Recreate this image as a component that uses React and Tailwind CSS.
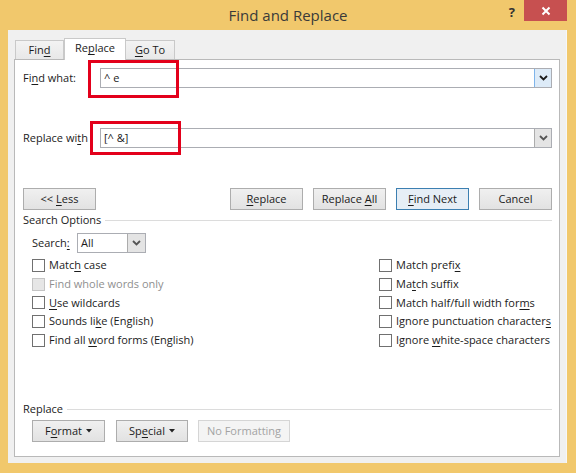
import React from "react";

const FONT = { fontFamily: '"Open Sans", "Noto Sans", sans-serif' };

function Chevron({ dark }) {
  return (
    <svg width="9" height="6" viewBox="0 0 9 6">
      <path
        d="M1 1l3.5 3.5L8 1"
        fill="none"
        stroke={dark ? "#1a1a1a" : "#555"}
        strokeWidth="1.8"
      />
    </svg>
  );
}

function Btn({ children, w = "w-[73px]", primary, disabled }) {
  return (
    <div
      className={`${w} h-[22px] flex items-center justify-center border text-[11px] whitespace-nowrap ${
        primary
          ? "border-[#3C7FB1] bg-[#E6EEF6]"
          : disabled
            ? "border-[#D5D5D5] bg-[#F4F4F4] text-[#A3A3A3]"
            : "border-[#ADADAD] bg-gradient-to-b from-[#F0F0F0] to-[#E2E2E2]"
      }`}
    >
      <span>{children}</span>
    </div>
  );
}

function Check({ children, disabled }) {
  return (
    <div className="h-[18.75px] flex items-center whitespace-nowrap">
      <div
        className={`w-[13px] h-[13px] shrink-0 border ${
          disabled ? "border-[#C4C4C4] bg-[#E6E6E6]" : "border-[#707070] bg-white"
        }`}
      />
      <span className={`ml-[4px] text-[11px] ${disabled ? "text-[#8F8F8F]" : ""}`}>
        {children}
      </span>
    </div>
  );
}

const U = ({ children }) => <u className="underline-offset-2">{children}</u>;

function Arrow() {
  return (
    <svg width="6" height="4" viewBox="0 0 6 4" className="inline-block ml-[4px] mb-[2px]">
      <path d="M0 0h6L3 3.5z" fill="#222" />
    </svg>
  );
}

export default function App() {
  return (
    <div
      className="w-[576px] h-[473px] bg-[#F1C86C] flex flex-col text-[#1b1b1b]"
      style={FONT}
    >
      {/* title bar */}
      <div className="h-[30px] flex items-start shrink-0">
        <div className="w-[80px]" />
        <div className="flex-1 text-center text-[15px] leading-[30px] text-[#3a3a3a]">
          Find and Replace
        </div>
        <div className="w-[80px] flex justify-end pr-[9px]">
          <span className="mt-[3px] mr-[9px] text-[13px] font-bold text-[#333]">?</span>
          <div className="w-[43px] h-[21px] bg-[#C75050] flex items-center justify-center">
            <svg width="10" height="10" viewBox="0 0 10 10">
              <path d="M1.5 1.5l7 7M8.5 1.5l-7 7" stroke="#fff" strokeWidth="2" />
            </svg>
          </div>
        </div>
      </div>

      {/* body */}
      <div className="flex-1 ml-[8px] mr-[9px] mb-[10px] bg-[#F0F0F0] border-r border-[#F7F7F7] flex flex-col pt-[7px] pl-[6px] pr-[6px] pb-[6px]">
        {/* tabs */}
        <div className="flex items-end h-[22px] pl-[1px] relative z-10">
          <div className="w-[49px] h-[19px] border border-b-0 border-[#C9C9C9] bg-gradient-to-b from-[#F3F3F3] to-[#E8E8E8] flex items-center justify-center text-[11px]">
            <span>
              Fin<U>d</U>
            </span>
          </div>
          <div className="w-[62px] h-[22px] -mb-px border border-b-0 border-[#C9C9C9] bg-white flex items-center justify-center text-[11px] pb-[2px]">
            <span>
              Re<U>p</U>lace
            </span>
          </div>
          <div className="w-[49px] h-[19px] border border-b-0 border-l-0 border-[#C9C9C9] bg-gradient-to-b from-[#F3F3F3] to-[#E8E8E8] flex items-center justify-center text-[11px]">
            <span>
              <U>G</U>o To
            </span>
          </div>
        </div>

        {/* panel */}
        <div className="flex-1 bg-white border border-[#B9B9B9] flex flex-col pl-[8px] pr-[7px] pb-[14px]">
          <div className="mt-[8px] flex items-center h-[20px]">
            <div className="w-[77px] text-[11px]">
              Fi<U>n</U>d what:
            </div>
            <div className="flex-1 h-[20px] relative border border-[#ABADB3] flex items-center">
              <span className="pl-[3px] text-[11px]">^ e</span>
              <div className="ml-auto w-[17px] h-[18px] bg-[#DDEBF8] border-l border-[#7EB4EA] flex items-center justify-center">
                <Chevron dark />
              </div>
              <div className="absolute left-[-13px] top-[-9px] w-[91px] h-[38px] border-[3px] border-[#E3001B]" />
            </div>
          </div>

          <div className="mt-[40px] flex items-center h-[20px]">
            <div className="w-[77px] text-[11px] whitespace-nowrap">
              Replace wi<U>t</U>h
            </div>
            <div className="flex-1 h-[20px] relative border border-[#ABADB3] flex items-center">
              <span className="pl-[3px] text-[11px]">[^ &amp;]</span>
              <div className="ml-auto w-[17px] h-[18px] bg-[#E4E4E4] border-l border-[#ACACAC] flex items-center justify-center">
                <Chevron />
              </div>
              <div className="absolute left-[-11px] top-[-8px] w-[91px] h-[34px] border-[3px] border-[#E3001B]" />
            </div>
          </div>

          {/* buttons */}
          <div className="mt-[40px] flex items-center">
            <Btn>
              &lt;&lt; <U>L</U>ess
            </Btn>
            <div className="ml-auto flex gap-[10px]">
              <Btn>
                <U>R</U>eplace
              </Btn>
              <Btn>
                Replace <U>A</U>ll
              </Btn>
              <Btn primary>
                <U>F</U>ind Next
              </Btn>
              <Btn>Cancel</Btn>
            </div>
          </div>

          {/* search options */}
          <div className="mt-[2px] flex items-center h-[16px]">
            <span className="text-[11px]">Search Options</span>
            <div className="flex-1 h-px bg-[#DCDCDC] ml-[4px]" />
          </div>

          <div className="mt-[5px] ml-[9px] flex items-center h-[20px]">
            <div className="w-[45px] text-[11px]">
              Search<U>:</U>
            </div>
            <div className="w-[69px] h-[20px] border border-[#ABADB3] flex items-center">
              <span className="pl-[3px] text-[11px]">All</span>
              <div className="ml-auto w-[18px] h-[18px] bg-[#E4E4E4] border-l border-[#ACACAC] flex items-center justify-center">
                <Chevron />
              </div>
            </div>
          </div>

          <div className="mt-[3px] ml-[9px] grid grid-cols-[347px_1fr]">
            <div className="flex flex-col">
              <Check>
                Matc<U>h</U> case
              </Check>
              <Check disabled>Find whole words only</Check>
              <Check>
                <U>U</U>se wildcards
              </Check>
              <Check>
                Sounds li<U>k</U>e (English)
              </Check>
              <Check>
                Find all <U>w</U>ord forms (English)
              </Check>
            </div>
            <div className="flex flex-col">
              <Check>
                Match prefi<U>x</U>
              </Check>
              <Check>
                Ma<U>t</U>ch suffix
              </Check>
              <Check>
                Match half/full width for<U>m</U>s
              </Check>
              <Check>
                Ignore punctuation character<U>s</U>
              </Check>
              <Check>
                Ignore <U>w</U>hite-space characters
              </Check>
            </div>
          </div>

          {/* replace */}
          <div className="mt-auto flex items-center h-[16px]">
            <span className="text-[11px]">Replace</span>
            <div className="flex-1 h-px bg-[#DCDCDC] ml-[4px]" />
          </div>
          <div className="mt-[3px] ml-[9px] flex items-center gap-[10px]">
            <Btn>
              F<U>o</U>rmat
              <Arrow />
            </Btn>
            <Btn w="w-[72px] ml-[1px]">
              Sp<U>e</U>cial
              <Arrow />
            </Btn>
            <Btn w="w-[92px]" disabled>
              No Formatting
            </Btn>
          </div>
        </div>
      </div>
    </div>
  );
}
